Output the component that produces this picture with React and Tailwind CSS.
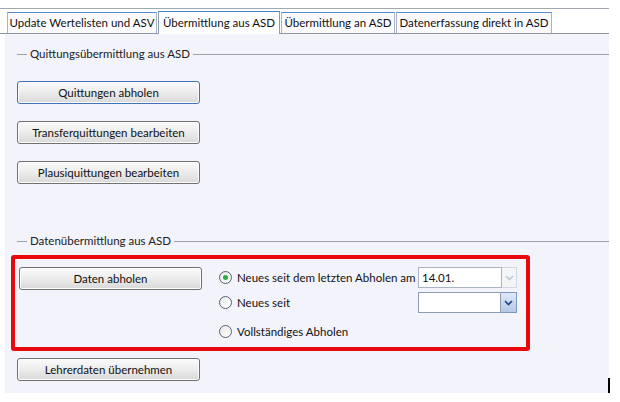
const font = "font-['Lato','Segoe_UI',sans-serif]";

const Tab = ({ label, active, width }) => (
  <div
    className={`flex items-center justify-center whitespace-nowrap border border-b-0 text-[11.5px] leading-none text-[#111] ${width} ${
      active ? "mb-[-1px] h-[23px] border-[#8a9ab0] border-t-[#4f7fc0] bg-white" : "h-[21px] border-[#a8b3c4] border-t-[#5b8bd0] bg-[#fbfbfe]"
    }`}
  >
    {label}
  </div>
);

const WinButton = ({ label, focused }) => (
  <button
    className={`flex h-[23px] w-[183px] items-center justify-center whitespace-nowrap rounded-[3px] border bg-gradient-to-b from-[#fbfbfb] via-[#ececec] to-[#d9d9d9] text-[11.5px] text-[#111] shadow-[inset_0_0_0_1px_#fdfdfd] ${
      focused ? "border-[#3d74b6]" : "border-[#707070]"
    }`}
  >
    {label}
  </button>
);

const Legend = ({ label }) => (
  <div className="flex h-[18px] items-center gap-[3px] pl-[12px] text-[11.5px] text-[#222]">
    <div className="h-px w-[10px] bg-[#9aa0ab]" />
    <span className="whitespace-nowrap">{label}</span>
    <div className="h-px flex-1 bg-[#9aa0ab]" />
  </div>
);

const Radio = ({ label, checked }) => (
  <div className="flex items-center gap-[5px] whitespace-nowrap text-[11.5px] text-[#111]">
    <div className="flex h-[13px] w-[13px] items-center justify-center rounded-full border border-[#5a6270] bg-gradient-to-br from-[#e8e8e8] to-white">
      {checked ? <div className="h-[5px] w-[5px] rounded-full bg-[#2fae3e]" /> : null}
    </div>
    <span>{label}</span>
  </div>
);

const Chevron = ({ color }) => (
  <svg width="9" height="6" viewBox="0 0 9 6">
    <path d="M1 1 L4.5 4.5 L8 1" fill="none" stroke={color} strokeWidth="1.6" />
  </svg>
);

const App = () => {
  return (
    <div className={`relative h-[402px] w-[620px] bg-white ${font}`}>
      <div className="pt-[8px]">
        <div className="w-[609px] border-t border-[#a3a7ae]" />
        <div className="mt-[2px] flex h-[23px] w-[609px] items-end gap-[1px] border-b border-[#8d97a6] pl-[7px]">
          <Tab label="Update Wertelisten und ASV" width="w-[150px]" />
          <Tab label="Übermittlung aus ASD" width="w-[122px]" active />
          <Tab label="Übermittlung an ASD" width="w-[114px]" />
          <Tab label="Datenerfassung direkt in ASD" width="w-[156px]" />
        </div>
        <div className="ml-[5px] h-[359px] w-[604px] bg-[#f3f3fc] pt-[11px]">
          <Legend label="Quittungsübermittlung aus ASD" />
          <div className="ml-[12px] mt-[18px] flex flex-col gap-[17px]">
            <WinButton label="Quittungen abholen" focused />
            <WinButton label="Transferquittungen bearbeiten" />
            <WinButton label="Plausiquittungen bearbeiten" />
          </div>
          <div className="mt-[48px]">
            <Legend label="Datenübermittlung aus ASD" />
          </div>
          <div className="ml-[6px] mt-[5px] flex h-[96px] w-[519px] gap-[17px] rounded-[3px] border-[4px] border-[#e8090e] pl-[4px] pt-[8px]">
            <WinButton label="Daten abholen" />
            <div className="flex w-[298px] flex-col">
              <div className="flex h-[21px] items-center justify-between">
                <Radio label="Neues seit dem letzten Abholen am" checked />
                <div className="flex h-[21px]">
                  <div className="flex w-[84px] items-center border border-[#a9b3c2] bg-white pl-[3px] text-[11.5px] text-[#111]">14.01.</div>
                  <div className="flex w-[15px] items-center justify-center border border-l-0 border-[#d4d8de] bg-[#f4f5f7]">
                    <Chevron color="#c3c8d0" />
                  </div>
                </div>
              </div>
              <div className="mt-[4px] flex h-[21px] items-center justify-between">
                <Radio label="Neues seit" />
                <div className="flex h-[21px]">
                  <div className="w-[83px] border border-[#8e9db3] bg-white" />
                  <div className="flex w-[16px] items-center justify-center border border-l-0 border-[#7f98bf] bg-gradient-to-b from-[#dfe9f7] to-[#b4c8e6]">
                    <Chevron color="#1d3f8a" />
                  </div>
                </div>
              </div>
              <div className="mt-[8px] flex h-[21px] items-center">
                <Radio label="Vollständiges Abholen" />
              </div>
            </div>
          </div>
          <div className="ml-[12px] mt-[7px]">
            <WinButton label="Lehrerdaten übernehmen" />
          </div>
        </div>
      </div>
      <div className="absolute left-[608px] top-[378px] h-[15px] w-[2px] bg-black" />
    </div>
  );
};

export default App;
